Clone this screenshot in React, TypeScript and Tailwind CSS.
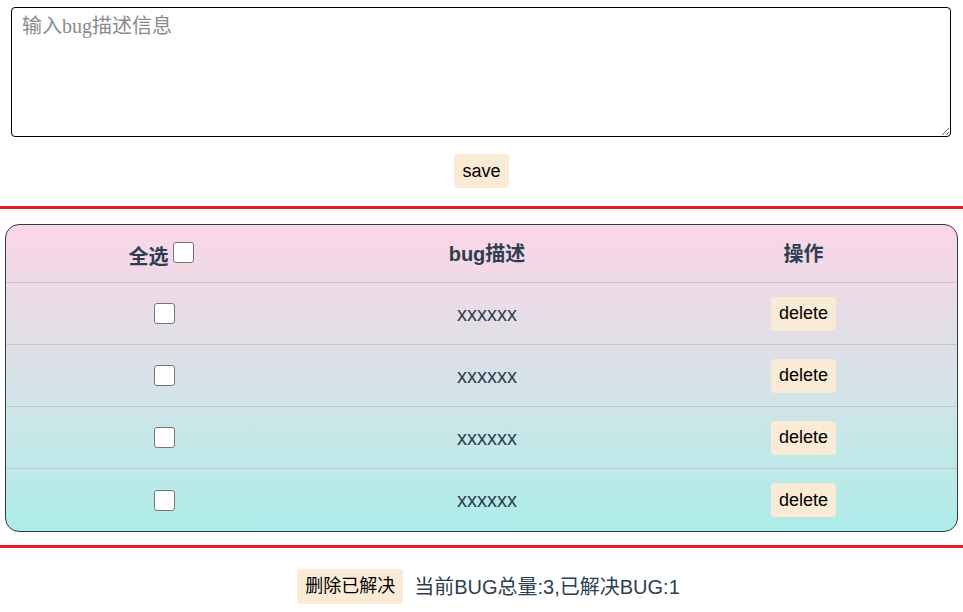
import { useState } from 'react';

type Bug = { id: number; desc: string; done: boolean };

const sans = "font-['Liberation_Sans','Noto_Sans_CJK_SC',sans-serif]";

function Check({ checked, onChange }: { checked: boolean; onChange: () => void }) {
  return (
    <input
      type="checkbox"
      checked={checked}
      onChange={onChange}
      className="m-0 h-[21px] w-[21px] appearance-none rounded-[3px] border border-[#767676] bg-white align-middle"
    />
  );
}

export default function App() {
  const [bugs, setBugs] = useState<Bug[]>([
    { id: 1, desc: 'xxxxxx', done: false },
    { id: 2, desc: 'xxxxxx', done: false },
    { id: 3, desc: 'xxxxxx', done: false },
    { id: 4, desc: 'xxxxxx', done: false },
  ]);
  const [text, setText] = useState('');

  const toggle = (id: number) =>
    setBugs((prev) => prev.map((b) => (b.id === id ? { ...b, done: !b.done } : b)));

  return (
    <div className={`${sans} h-[612px] w-[963px] overflow-hidden bg-white`}>
      <div className="px-[11px] pt-[7px]">
        <textarea
          value={text}
          onChange={(e) => setText(e.target.value)}
          placeholder="输入bug描述信息"
          className="block h-[130px] w-[940px] rounded-[4px] border border-black px-[10px] py-[5px] font-['Liberation_Serif','Noto_Sans_CJK_SC',serif] text-[20px] leading-[26px] text-black outline-none placeholder:text-[#8a8a8a]"
        />
      </div>

      <div className="mt-[17px] flex justify-center">
        <button className="h-[34px] rounded-[4px] bg-[#faebd7] px-[8px] text-[18px] text-black">
          save
        </button>
      </div>

      <div className="mt-[18px] h-[3px] w-full bg-[#ed1c24]" />

      {/* bug table */}
      <div className="mx-[5px] mt-[15px] h-[308px] overflow-hidden rounded-[14px] border border-[#2c3e50] bg-gradient-to-b from-[#fbd6e5] to-[#abede9] text-[#2c3e50]">
        <div className="grid h-[58px] grid-cols-[314px_334px_1fr] items-center border-b border-[#c8c8c8] text-[20px] font-bold">
          <div className="flex items-center justify-center gap-[4px] pr-[4px]">
            <span className="pt-[6px]">全选</span>
            <span className="-mt-[3px] flex">
              <Check
                checked={bugs.every((b) => b.done)}
                onChange={() => {
                  const all = bugs.every((b) => b.done);
                  setBugs((prev) => prev.map((b) => ({ ...b, done: !all })));
                }}
              />
            </span>
          </div>
          <div className="text-center">bug描述</div>
          <div className="pr-[4px] text-center">操作</div>
        </div>
        {bugs.map((bug, i) => (
          <div
            key={bug.id}
            className={`grid h-[62px] grid-cols-[314px_334px_1fr] items-center text-[20px] ${
              i < bugs.length - 1 ? 'border-b border-[#c8c8c8]' : ''
            }`}
          >
            <div className="flex justify-center pl-[2px]">
              <Check checked={bug.done} onChange={() => toggle(bug.id)} />
            </div>
            <div className="text-center">{bug.desc}</div>
            <div className="flex justify-center pr-[4px]">
              <button
                onClick={() => setBugs((prev) => prev.filter((b) => b.id !== bug.id))}
                className="h-[34px] rounded-[4px] bg-[#faebd7] px-[8px] text-[18px] text-black"
              >
                delete
              </button>
            </div>
          </div>
        ))}
      </div>

      <div className="mt-[13px] h-[3px] w-full bg-[#ed1c24]" />

      <div className="mt-[21px] flex items-center justify-center gap-[11px] pl-[14px]">
        <button className="h-[35px] rounded-[4px] bg-[#faebd7] px-[8px] text-[18px] text-black">
          删除已解决
        </button>
        <span className="text-[20px] text-[#2c3e50]">当前BUG总量:3,已解决BUG:1</span>
      </div>
    </div>
  );
}
